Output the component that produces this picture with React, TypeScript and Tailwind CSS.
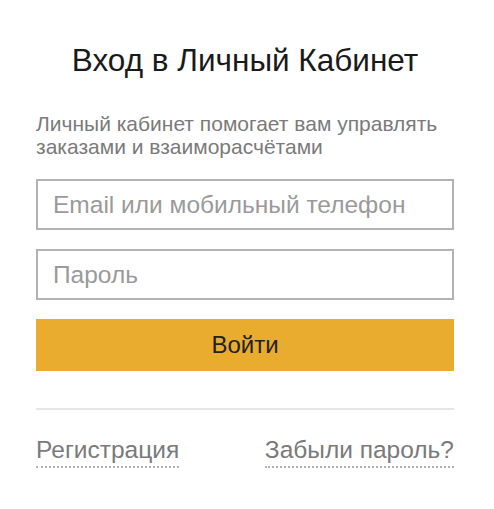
export default function App() {
  return (
    <div className="min-h-screen bg-white font-['Liberation_Sans',Arial,sans-serif]">
      <div className="ml-[36px] w-[418px] pt-[40px]">
        <h1 className="text-center text-[31.5px] leading-[40px] text-[#1a1a1a]">
          Вход в Личный Кабинет
        </h1>

        <p className="mt-[32px] text-[21px] leading-[23px] text-[#7a7a7a]">
          Личный кабинет помогает вам управлять заказами и взаиморасчётами
        </p>

        <form className="mt-[21px] flex flex-col">
          <input
            type="text"
            placeholder="Email или мобильный телефон"
            className="h-[51px] border-2 border-[#b3b3b3] px-[15px] text-[24.5px] text-[#333] outline-none placeholder:text-[#9a9a9a]"
          />
          <input
            type="password"
            placeholder="Пароль"
            className="mt-[19px] h-[51px] border-2 border-[#b3b3b3] px-[15px] text-[24.5px] text-[#333] outline-none placeholder:text-[#9a9a9a]"
          />
          <button
            type="button"
            className="mt-[19px] h-[52px] bg-[#e9ac2f] text-[24px] text-[#222]"
          >
            Войти
          </button>
        </form>

        <div className="mt-[37px] h-[2px] bg-[#e6e6e6]" />

        <div className="mt-[24px] flex justify-between text-[24.5px] leading-[32px] text-[#7a7a7a]">
          <a href="#" className="border-b-2 border-dotted border-[#b0b0b0]">
            Регистрация
          </a>
          <a href="#" className="border-b-2 border-dotted border-[#b0b0b0]">
            Забыли пароль?
          </a>
        </div>
      </div>
    </div>
  );
}
